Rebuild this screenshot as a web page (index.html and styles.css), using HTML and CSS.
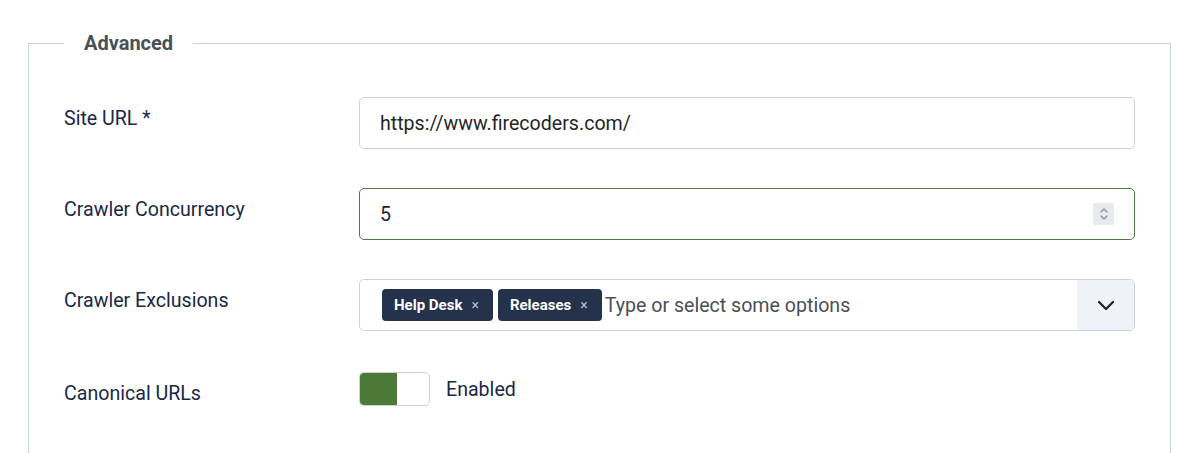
FILE: index.html
```html
<!DOCTYPE html>
<html lang="en">
<head>
<meta charset="utf-8">
<title>Advanced</title>
<link rel="stylesheet" href="styles.css">
</head>
<body>
<fieldset class="panel">
  <legend class="panel-title">Advanced</legend>

  <div class="row">
    <label class="row-label" for="site-url">Site URL *</label>
    <div class="row-control">
      <input id="site-url" class="text-input" type="text" value="https://www.firecoders.com/">
    </div>
  </div>

  <div class="row">
    <label class="row-label" for="concurrency">Crawler Concurrency</label>
    <div class="row-control">
      <div class="number-box">
        <input id="concurrency" class="number-input" type="text" value="5">
        <span class="spinner">
          <svg width="10" height="16" viewBox="0 0 10 16" fill="none" stroke="#8a8f99" stroke-width="1.3" stroke-linecap="round" stroke-linejoin="round">
            <path d="M2 6 L5 3 L8 6"/>
            <path d="M2 10 L5 13 L8 10"/>
          </svg>
        </span>
      </div>
    </div>
  </div>

  <div class="row">
    <span class="row-label">Crawler Exclusions</span>
    <div class="row-control">
      <div class="choices">
        <div class="choices-inner">
          <span class="tag">Help Desk <span class="tag-x">×</span></span>
          <span class="tag">Releases <span class="tag-x">×</span></span>
          <span class="choices-placeholder">Type or select some options</span>
        </div>
        <span class="choices-button">
          <svg width="18" height="11" viewBox="0 0 18 11" fill="none" stroke="#1c1f24" stroke-width="2.2" stroke-linecap="round" stroke-linejoin="round">
            <path d="M2 2 L9 9 L16 2"/>
          </svg>
        </span>
      </div>
    </div>
  </div>

  <div class="row row-switch">
    <span class="row-label">Canonical URLs</span>
    <div class="row-control switch-control">
      <span class="switch"><span class="switch-on"></span></span>
      <span class="switch-text">Enabled</span>
    </div>
  </div>
</fieldset>
</body>
</html>
```

FILE: styles.css
```css
html, body {
  margin: 0;
  padding: 0;
  background: #ffffff;
}

body {
  font-family: Roboto, "Liberation Sans", Arial, sans-serif;
  font-size: 19.6px;
  color: #1a2847;
}

.panel {
  box-sizing: border-box;
  margin: 28px 29px 0 28px;
  padding: 39px 35px 80px 35px;
  border: 1px solid #c9d1dd;
  border-bottom: none;
  min-width: 0;
}

.panel-title {
  padding: 0 20px;
  font-size: 20px;
  font-weight: 700;
  line-height: 30px;
  color: #495057;
}

.row {
  display: grid;
  grid-template-columns: 295px 1fr;
  margin-bottom: 39px;
}

.row-label {
  padding-top: 8px;
  line-height: 28px;
  font-size: 19.6px;
  color: #1a2847;
}

.row-control {
  min-width: 0;
}

.text-input,
.number-box,
.choices {
  box-sizing: border-box;
  width: 100%;
  height: 52px;
  border: 1px solid #cbd2dc;
  border-radius: 5px;
  background: #fff;
}

.text-input {
  display: block;
  padding: 0 20px;
  font-family: inherit;
  font-size: 19.6px;
  color: #22262a;
  outline: none;
}

.number-box {
  display: flex;
  align-items: center;
  border-color: #4e7a40;
  padding: 0 20px;
}

.number-input {
  flex: 1;
  min-width: 0;
  border: none;
  outline: none;
  padding: 0;
  font-family: inherit;
  font-size: 19.6px;
  color: #22262a;
  background: transparent;
}

.spinner {
  display: flex;
  align-items: center;
  justify-content: center;
  width: 21px;
  height: 22px;
  background: #e8eaee;
  border-radius: 2px;
}

.choices {
  display: flex;
  align-items: stretch;
  overflow: hidden;
}

.choices-inner {
  flex: 1;
  display: flex;
  align-items: center;
  gap: 5px;
  padding-left: 22px;
  min-width: 0;
}

.tag {
  display: inline-flex;
  align-items: center;
  height: 32px;
  padding: 0 14px 0 12px;
  background: #24324b;
  color: #ffffff;
  font-size: 15px;
  font-weight: 700;
  border-radius: 4px;
  white-space: nowrap;
}

.tag-x {
  margin-left: 9px;
  font-size: 14px;
  font-weight: 400;
  color: #b7bcc6;
}

.choices-placeholder {
  margin-left: -2px;
  font-size: 19.6px;
  color: #4b4f56;
  white-space: nowrap;
}

.choices-button {
  display: flex;
  align-items: center;
  justify-content: center;
  width: 57px;
  background: #eff2f8;
}

.row-switch {
  margin-bottom: 0;
}

.row-switch .row-label {
  padding-top: 10px;
}

.switch-control {
  display: flex;
  align-items: center;
  height: 34px;
  padding-top: 2px;
}

.switch {
  box-sizing: border-box;
  display: flex;
  width: 71px;
  height: 34px;
  border: 1px solid #cbd2dc;
  border-radius: 5px;
  background: #fff;
  overflow: hidden;
}

.switch-on {
  width: 37px;
  height: 100%;
  background: #4b7a37;
}

.switch-text {
  margin-left: 16px;
  font-size: 19.6px;
  color: #1a2847;
}
```
